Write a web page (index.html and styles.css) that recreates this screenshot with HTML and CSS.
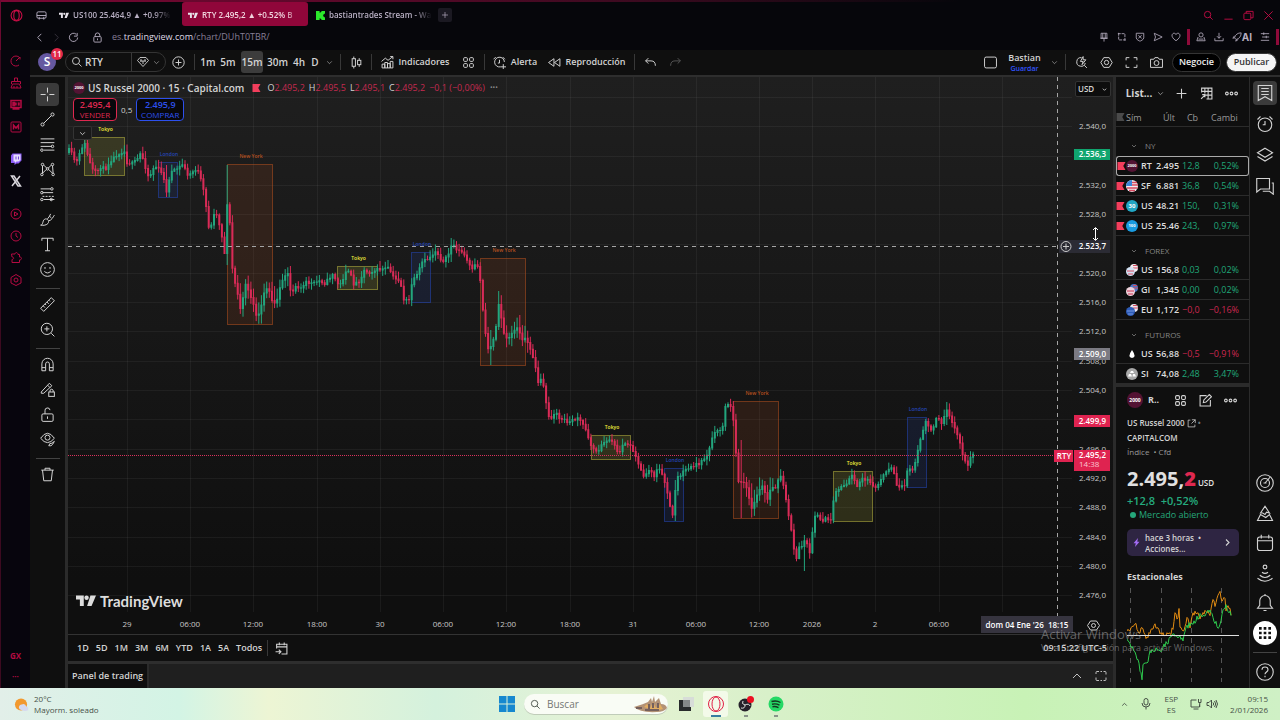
FILE: index.html
```html
<!DOCTYPE html>
<html lang="es">
<head>
<meta charset="utf-8">
<title>RTY 2.495,2 ▲ +0.52% Bastian</title>
<link rel="stylesheet" href="styles.css">
</head>
<body>
<svg class="defs" aria-hidden="true">
  <symbol id="search" viewBox="0 0 24 24"><circle cx="10" cy="10" r="7"/><path d="M15 15l6 6"/></symbol>
  <symbol id="chev" viewBox="0 0 24 24"><path d="M4 8l8 8 8-8"/></symbol>
  <symbol id="plus" viewBox="0 0 24 24"><path d="M12 3v18M3 12h18"/></symbol>
  <symbol id="pluscircle" viewBox="0 0 24 24"><circle cx="12" cy="12" r="10.5"/><path d="M12 6.500v11M6.500 12h11"/></symbol>
  <symbol id="tv" viewBox="0 0 36 20"><path class="solid" d="M0 0h14v19H7V7.500H0zM26 0h10l-8 19h-8z"/><circle class="solid" cx="19" cy="4" r="4"/></symbol>
  <symbol id="grid4" viewBox="0 0 24 24"><rect x="3" y="3" width="7" height="7" rx="2"/><rect x="14" y="3" width="7" height="7" rx="2"/><rect x="3" y="14" width="7" height="7" rx="2"/><rect x="14" y="14" width="7" height="7" rx="2"/></symbol>
  <symbol id="dots" viewBox="0 0 24 24"><circle cx="3.500" cy="12" r="2.500"/><circle cx="12" cy="12" r="2.500"/><circle cx="20.500" cy="12" r="2.500"/></symbol>
  <symbol id="gear" viewBox="0 0 24 24"><path d="M7 3h10l5.500 9-5.500 9H7l-5.500-9z"/><circle cx="12" cy="12" r="4"/></symbol>
  <symbol id="clock" viewBox="0 0 24 24"><circle cx="12" cy="12" r="10"/><path d="M12 6v6l4 3"/></symbol>
  <symbol id="alarm" viewBox="0 0 24 24"><circle cx="12" cy="13" r="9"/><path d="M12 8v5H9M2 6l4-4M22 6l-4-4"/></symbol>
  <symbol id="lock" viewBox="0 0 24 24"><rect x="4" y="10" width="16" height="12" rx="2"/><path d="M7 10V7a5 5 0 0 1 10 0v3M12 14v4"/></symbol>
  <symbol id="cal" viewBox="0 0 24 24"><rect x="2" y="4" width="20" height="18" rx="3"/><path d="M2 9h20M7 1v5M17 1v5"/></symbol>
  <symbol id="flag" viewBox="0 0 9 9"><path class="solid" d="M0 0h9L6.500 4.500 9 9H0z"/></symbol>
  <symbol id="us" viewBox="0 0 12 12"><circle cx="6" cy="6" r="6" fill="#f1eef2" stroke="none"/><path d="M6 2.500h5M6 5h6M1 8h10.500M3 10.500h6" stroke="#d84a5f" stroke-width="1.300"/><path d="M0 6A6 6 0 0 1 6 0v6z" fill="#3c86d8" stroke="none"/></symbol>
</svg>

<div class="window">
  <header class="browser">
    <div class="tabs">
      <button class="opera" aria-label="Opera GX"><svg viewBox="0 0 24 24"><circle cx="12" cy="12" r="10"/><ellipse cx="12" cy="12" rx="5" ry="9"/></svg></button>
      <button class="workspace" aria-label="Espacio"><svg viewBox="0 0 24 24"><rect x="2" y="4" width="20" height="14" rx="3"/><path d="M2 12h20M7 15v6M17 15v6"/></svg></button>
      <button class="tab"><svg class="wide"><use href="#tv"/></svg><span>US100 25.464,9 ▲ +0.97%</span></button>
      <button class="tab active"><svg class="wide"><use href="#tv"/></svg><span>RTY 2.495,2 ▲ +0.52% B</span></button>
      <button class="tab kick"><svg viewBox="0 0 10 10"><path class="solid" d="M0 0h4v2h1V1h1V0h4v3H9v1H8v2h1v1h1v3H6V9H5V8H4v2H0z"/></svg><span>bastiantrades Stream - Wa</span></button>
      <button class="newtab" aria-label="Nueva pestaña"><svg><use href="#plus"/></svg></button>
      <div class="winbtns">
        <button aria-label="Buscar"><svg><use href="#search"/></svg></button>
        <button aria-label="Minimizar"><svg viewBox="0 0 24 24"><path d="M3 20h18"/></svg></button>
        <button aria-label="Restaurar"><svg viewBox="0 0 24 24"><rect x="2" y="7" width="15" height="14" rx="2"/><path d="M7 7V3h15v14h-5"/></svg></button>
        <button aria-label="Cerrar"><svg viewBox="0 0 24 24"><path d="M3 3l18 18M21 3L3 21"/></svg></button>
      </div>
    </div>
    <div class="address">
      <button aria-label="Atrás"><svg class="rot90"><use href="#chev"/></svg></button>
      <button class="dim" aria-label="Adelante"><svg class="rot270"><use href="#chev"/></svg></button>
      <button aria-label="Recargar"><svg viewBox="0 0 24 24"><path d="M21 12a9 9 0 1 1-3-7M20 2v7h-7"/></svg></button>
      <button class="padlock" aria-label="Seguridad"><svg><use href="#lock"/></svg></button>
      <a class="url" href="#chart">es.<b>tradingview.com</b>/chart/DUhT0TBR/</a>
      <div class="extensions">
        <button aria-label="Fijar"><svg viewBox="0 0 24 24"><path d="M5 3h14v12H5zM9 3v12M15 3v12M12 15v8M3 15h18"/></svg></button>
        <button aria-label="Captura"><svg viewBox="0 0 24 24"><path d="M4 2v17h17M2 4h17v17" stroke-dasharray="7 2"/></svg></button>
        <button aria-label="Escudo"><svg viewBox="0 0 24 24"><path d="M3 3h18v11c0 5-9 8-9 8s-9-3-9-8zM8 8l8 7M16 8l-8 7"/></svg></button>
        <button aria-label="Enviar"><svg viewBox="0 0 24 24"><path d="M3 3l19 9-19 9 3-9z"/></svg></button>
        <button aria-label="Favorito"><svg viewBox="0 0 24 24"><path d="M12 21C-4 10 4 2 8 3c3 0 4 3 4 3s1-3 4-3c4-1 12 7-4 18z"/></svg></button>
        <i class="bar"></i>
        <button aria-label="Perfil"><svg viewBox="0 0 24 24"><circle cx="12" cy="7" r="5"/><path d="M5 12l-3 9h20l-3-9M6 17h12"/></svg></button>
        <button aria-label="Descargas"><svg viewBox="0 0 24 24"><path d="M12 2v13M7 10l5 5 5-5M2 15v6h20v-6"/></svg></button>
        <button class="ai"><svg viewBox="0 0 24 24"><path d="M6 14c2-8 8-12 16-12 0 8-4 14-12 16zM6 14l-4 1 4-6M10 18l-1 4 6-4"/></svg>AI</button>
        <button aria-label="Menú"><svg viewBox="0 0 24 24"><path d="M2 4h20M5 12h17M2 20h20M9 1v6M15 9v6"/></svg></button>
        <i class="bar"></i>
      </div>
    </div>
  </header>

  <div class="middle">
    <nav class="gx">
      <button aria-label="GX Control"><svg viewBox="0 0 24 24"><path d="M18 20A10 10 0 1 1 19 5M12 12l8-8v5"/></svg></button>
      <button aria-label="GX Cleaner"><svg viewBox="0 0 24 24"><path d="M9 9V2h6v7M3 14V9h18v5M5 14l-3 8h20l-3-8zM8 18v4M14 18v4"/></svg></button>
      <button aria-label="Mods"><svg viewBox="0 0 24 24"><path d="M2 3h20v14H2zM5 20h14M6 7h3v6H6zM12 7v6M16 7l3 6M19 7l-3 6" stroke-width="3"/></svg></button>
      <button aria-label="Mercado"><svg viewBox="0 0 24 24"><rect x="2" y="2" width="20" height="20" rx="2"/><path d="M7 17V8l5 6 5-6v9" stroke-width="3"/></svg></button>
      <button class="twitch" aria-label="Twitch"><svg viewBox="0 0 24 24"><path fill="#8b5cf6" stroke="none" d="M5 1h18v14l-6 6h-4l-4 3v-4H2V5z"/><path fill="#e6dcff" stroke="none" d="M7 3h14v11l-4 3h-4l-3 3v-3H7z"/><path stroke="#7348d8" d="M12 7v6M17 7v6"/></svg></button>
      <button class="x" aria-label="X"><svg viewBox="0 0 24 24"><path d="M3 2h5l13 20h-5zM20 2L4 22" stroke-width="3"/></svg></button>
      <button class="gap" aria-label="Reproductor"><svg viewBox="0 0 24 24"><circle cx="12" cy="12" r="10"/><path d="M9 8l7 4-7 4z"/></svg></button>
      <button aria-label="Historial"><svg><use href="#clock"/></svg></button>
      <button aria-label="Extensiones"><svg viewBox="0 0 24 24"><path d="M3 4h7c1-5 6-3 6 1h3v5c6 0 5 6 0 6v5H4v-6c5-1 4-5 0-5z"/></svg></button>
      <button aria-label="Ajustes"><svg viewBox="0 0 24 24"><path d="M12 1l10 6v11l-10 5-10-5V7z"/><circle cx="12" cy="12" r="4"/></svg></button>
      <span class="gxtext">GX</span>
      <span class="gxdots">•••</span>
    </nav>

    <div class="app">
      <div class="toolbar">
        <button class="avatar">S<span>11</span></button>
        <div class="searchbox">
          <label for="sym" aria-label="Símbolo"><svg><use href="#search"/></svg></label>
          <input id="sym" value="RTY">
          <button aria-label="Premium"><svg viewBox="0 0 24 24"><path d="M6 3h12l5 6-11 12L1 9zM6 10h12M8 6v5M16 6v5M12 10v6" /></svg><svg class="tiny"><use href="#chev"/></svg></button>
        </div>
        <button class="ib" aria-label="Comparar"><svg><use href="#pluscircle"/></svg></button>
        <i class="sep"></i>
        <button class="tf">1m</button><button class="tf">5m</button><button class="tf on">15m</button><button class="tf w">30m</button><button class="tf">4h</button><button class="tf d">D</button>
        <button class="chevb" aria-label="Más intervalos"><svg class="tiny"><use href="#chev"/></svg></button>
        <i class="sep"></i>
        <button class="cb" aria-label="Velas"><svg viewBox="0 0 24 24"><path d="M7 1v4M7 19v4M17 4v4M17 16v4"/><rect x="4" y="5" width="6" height="14"/><rect x="14" y="8" width="6" height="8"/></svg></button>
        <i class="sep"></i>
        <button class="lb ind"><svg viewBox="0 0 24 24"><path d="M1 10l7-6 5 4 9-7M17 1h5v5M2 22v-7h5v7M7 22V12h5v10M12 22v-8h5v8M17 22V10h5v12zH2"/></svg>Indicadores</button>
        <button class="gb" aria-label="Plantillas"><svg><use href="#grid4"/></svg></button>
        <i class="sep"></i>
        <button class="lb al"><svg viewBox="0 0 24 24"><path d="M14 20a9 9 0 1 1 7-9M12 7v6H9M1 6l4-4M22 6l-4-4M19 15v9M14 20h10"/></svg>Alerta</button>
        <button class="lb rp"><svg viewBox="0 0 24 24"><path d="M11 5v14L1 12zM22 5v14l-10-7z"/></svg>Reproducción</button>
        <i class="sep"></i>
        <button class="ib" aria-label="Deshacer"><svg viewBox="0 0 24 24"><path d="M8 4L3 9l5 5M3 9h10q8 0 8 9"/></svg></button>
        <button class="ib faint" aria-label="Rehacer"><svg viewBox="0 0 24 24"><path d="M16 4l5 5-5 5M21 9H11q-8 0-8 9"/></svg></button>
        <div class="tools-right">
          <button class="ib" aria-label="Diseño"><svg viewBox="0 0 24 24"><rect x="1" y="2" width="22" height="20" rx="3"/></svg></button>
          <button class="layoutname">Bastian<small>Guardar</small></button>
          <button class="chevb" aria-label="Diseños"><svg class="tiny"><use href="#chev"/></svg></button>
          <i class="sep"></i>
          <button class="ib" aria-label="Búsqueda rápida"><svg viewBox="0 0 24 24"><path d="M12 3a8 8 0 1 0 7 10M17 17l5 5M15 1l-5 9h5l-2 6 7-9h-5z"/></svg></button>
          <button class="ib" aria-label="Configuración"><svg><use href="#gear"/></svg></button>
          <button class="ib" aria-label="Pantalla completa"><svg viewBox="0 0 24 24"><path d="M2 8V3h6M16 3h6v5M22 16v5h-6M8 21H2v-5"/></svg></button>
          <button class="ib" aria-label="Instantánea"><svg viewBox="0 0 24 24"><path d="M1 6h6l2-3h6l2 3h6v15H1z"/><circle cx="12" cy="13" r="4.500"/></svg></button>
          <button class="pill">Negocie</button>
          <button class="pill white">Publicar</button>
        </div>
      </div>

      <div class="workspace-row">
        <div class="draw">
          <button class="sel" aria-label="Cruz"><svg viewBox="0 0 24 24"><path d="M12 1v8M12 15v8M1 12h8M15 12h8"/></svg></button>
          <button aria-label="Línea"><svg viewBox="0 0 24 24"><circle cx="4" cy="20" r="2.500"/><circle cx="20" cy="4" r="2.500"/><path d="M6 18L18 6"/></svg></button>
          <button aria-label="Fibonacci"><svg viewBox="0 0 24 24"><path d="M1 3h22M1 9h22M1 15h18M6 21h17"/><circle cx="20" cy="15" r="2"/><circle cx="3" cy="21" r="2"/></svg></button>
          <button aria-label="Patrones"><svg viewBox="0 0 24 24"><circle cx="4" cy="4" r="2"/><circle cx="20" cy="4" r="2"/><circle cx="12" cy="11" r="2"/><circle cx="3" cy="20" r="2"/><circle cx="21" cy="20" r="2"/><path d="M4 6v12M20 6l1 12M6 5l5 5M18 5l-5 5M10 12l-6 6M14 12l6 6"/></svg></button>
          <button aria-label="Predicción"><svg viewBox="0 0 24 24"><path d="M1 3h16M4 9h17M6 20h17" /><path d="M4 15h18" stroke-dasharray="3 2"/><circle cx="19" cy="3" r="2"/><circle cx="3" cy="9" r="2"/><circle cx="3" cy="20" r="2"/><circle cx="18" cy="20" r="2"/></svg></button>
          <button aria-label="Pincel"><svg viewBox="0 0 24 24"><path d="M1 21c5 0 2-9 8-10 4 0 6 4 4 7s-8 4-12 3zM12 11l3-4 3 2M15 7l2-4M14 14c4 0 7-6 9-9"/></svg></button>
          <button aria-label="Texto"><svg viewBox="0 0 24 24"><path d="M3 6V2h18v4M12 2v20M8 22h8"/></svg></button>
          <button aria-label="Iconos"><svg viewBox="0 0 24 24"><circle cx="12" cy="12" r="11"/><path d="M8 8v3M16 8v3M7 15q5 5 10 0"/></svg></button>
          <hr>
          <button aria-label="Medir"><svg viewBox="0 0 24 24"><path d="M1 18L18 1l5 5L6 23zM5 14l3 3M8 11l2 2M11 8l3 3M14 5l2 2"/></svg></button>
          <button aria-label="Ampliar"><svg viewBox="0 0 24 24"><circle cx="11" cy="11" r="9"/><path d="M18 18l5 5M11 7v8M7 11h8"/></svg></button>
          <hr>
          <button aria-label="Imán"><svg viewBox="0 0 24 24"><path d="M3 22V11a9 9 0 0 1 18 0v11h-6V11a3 3 0 0 0-6 0v11zM3 17h6M15 17h6"/></svg></button>
          <button aria-label="Seguir dibujando"><svg viewBox="0 0 24 24"><path d="M2 16L15 2l4 4L6 18H2zM12 5l4 4"/><rect x="14" y="16" width="9" height="7"/><path d="M16 16v-3q3-3 5 0v3"/></svg></button>
          <button aria-label="Bloquear"><svg viewBox="0 0 24 24"><rect x="3" y="11" width="18" height="12" rx="2"/><path d="M8 11V6a4 4 0 0 1 8-1M12 15v4"/></svg></button>
          <button aria-label="Ocultar"><svg viewBox="0 0 24 24"><path d="M1 10q11-16 22 0Q12 24 1 10z"/><circle cx="12" cy="9" r="4"/><path d="M14 22q1-5 5-4l4-3-3 5q-2 3-6 2z"/></svg></button>
          <hr>
          <button aria-label="Eliminar"><svg viewBox="0 0 24 24"><path d="M2 5h20M8 5V2h8v3M4 5l2 17h12l2-17"/></svg></button>
        </div>

        <main class="center" id="chart">
          <div class="chartwrap">
            <svg id="plot" class="plot" viewBox="68 77 1045 557">
              <g id="gridlines"></g>
              <g id="sessions"></g>
              <g id="candles"></g>
              <path class="priceline" d="M68 455.500H1054"/>
              <path class="cross" d="M68 246.500H1060M1057.500 77V616"/>
              <g id="axes"></g>
              <rect x="1074" y="149" width="36" height="11" fill="#10a56f"/><text class="tag" x="1106" y="157">2.536,3</text>
              <rect x="1059" y="240" width="51" height="13" fill="#2b2b34"/><text class="tag" x="1106" y="249">2.523,7</text>
              <g class="line"><circle cx="1066" cy="246.500" r="5"/><path d="M1063 246.500h6M1066 243.500v6"/></g>
              <rect x="1074" y="348" width="36" height="12" fill="#7b7a83"/><text class="tag" x="1106" y="357">2.509,0</text>
              <rect x="1074" y="415" width="36" height="12" fill="#df2350"/><text class="tag" x="1106" y="424">2.499,9</text>
              <rect x="1074" y="450" width="36" height="21" fill="#df2350"/><text class="tag" x="1106" y="458">2.495,2</text><text class="axis pale" x="1079" y="467">14:38</text>
              <rect x="1054" y="450" width="19" height="12" fill="#df2350"/><text class="tag mid" x="1064" y="459">RTY</text>
              <path class="cursor" d="M1095.500 228v12M1093 230l2.500-2.500 2.500 2.500M1093 238l2.500 2.500 2.500-2.500"/>
              <rect x="981" y="616" width="92" height="17" fill="#36343f"/><text class="tag mid" x="1027" y="628" xml:space="preserve">dom 04 Ene '26  18:15</text>
              <g class="line"><path d="M1090.500 621h6l3 4.500-3 4.500h-6l-3-4.500z"/><circle cx="1093.500" cy="625.500" r="2"/></g>
            </svg>
            <div class="legend">
              <div class="title"><span class="rlogo">2000</span><h1>US Russel 2000 · 15 · Capital.com</h1><svg class="flag"><use href="#flag"/></svg>
                <span class="ohlc">O<b>2.495,2</b></span><span class="ohlc">H<b>2.495,5</b></span><span class="ohlc">L<b>2.495,1</b></span><span class="ohlc">C<b>2.495,2</b></span><span class="ohlc"><b>−0,1 (−0,00%)</b></span><span class="more">•••</span></div>
              <div class="trade"><button class="sell"><b>2.495,4</b>VENDER</button><span>0,5</span><button class="buy"><b>2.495,9</b>COMPRAR</button></div>
              <button class="fold" aria-label="Contraer"><svg><use href="#chev"/></svg></button>
            </div>
            <div class="currency"><select aria-label="Moneda"><option>USD</option></select><svg><use href="#chev"/></svg></div>
            <div class="brand"><svg><use href="#tv"/></svg>TradingView</div>
          </div>
          <div class="ranges">
            <button>1D</button><button>5D</button><button>1M</button><button>3M</button><button>6M</button><button>YTD</button><button>1A</button><button>5A</button><button>Todos</button>
            <i class="sep"></i>
            <button aria-label="Ir a la fecha"><svg viewBox="0 0 24 24"><path d="M3 12V4h19v18H12M3 9h19M8 1v5M17 1v5M1 18h9M7 14l4 4-4 4"/></svg></button>
            <button class="utc">09:15:22 UTC-5</button>
          </div>
          <div class="panel">
            <button class="paneltab">Panel de trading</button>
            <button class="pi" aria-label="Abrir"><svg class="rot180"><use href="#chev"/></svg></button>
            <button class="pi" aria-label="Maximizar"><svg viewBox="0 0 24 24"><path d="M2 8V5q0-2 2-2h4M11 3h3M17 3h3q2 0 2 2v4M22 15v4q0 2-2 2h-3M14 21h-3M8 21H4q-2 0-2-2v-4"/></svg></button>
          </div>
        </main>

        <aside class="side">
          <section class="watch">
            <div class="wh"><button class="ttl">List...</button><button class="tinyb" aria-label="Listas"><svg class="tiny"><use href="#chev"/></svg></button><button aria-label="Añadir"><svg><use href="#plus"/></svg></button><button aria-label="Tabla"><svg viewBox="0 0 24 24"><path d="M3 10V2h19v20H12M3 8h19M9 2v10M15 2v20M9 15h13M2 22l7-7M4 14h5v5"/></svg></button><button aria-label="Más"><svg><use href="#dots"/></svg></button></div>
            <table>
              <thead><tr><th class="cf"><svg class="flag grey"><use href="#flag"/></svg></th><th class="cl" colspan="2">Sím</th><th class="cp">Últ</th><th class="cc">Cb</th><th class="cx">Cambi</th></tr></thead>
              <tbody id="quotes"></tbody>
            </table>
          </section>
          <section class="detail">
            <div class="dh"><span class="rlogo big">2000</span><b>R..</b><button aria-label="Cuadrícula"><svg><use href="#grid4"/></svg></button><button aria-label="Nota"><svg viewBox="0 0 24 24"><path d="M14 3H2v19h19V11M8 16l1-5L19 1l4 4-10 10z"/></svg></button><button aria-label="Más"><svg><use href="#dots"/></svg></button></div>
            <p class="nm">US Russel 2000 <svg viewBox="0 0 24 24"><path d="M9 3H3v18h18v-6M13 2h9v9M22 2L12 12"/></svg> <i>•</i><br>CAPITALCOM</p>
            <p class="kind">Índice &nbsp;• Cfd</p>
            <p class="big-price">2.495,<b>2</b><small>USD</small></p>
            <p class="chg">+12,8&ensp;+0,52%</p>
            <p class="open"><i></i>Mercado abierto</p>
            <button class="news"><svg viewBox="0 0 12 12"><path fill="#a26bf2" stroke="none" d="M8 0L2 7h3l-1 5 6-7H7z"/></svg><span>hace 3 horas&ensp;•<br>Acciones...</span><svg class="tiny rot270"><use href="#chev"/></svg></button>
            <h2>Estacionales</h2>
            <svg id="seasonal" class="seasonal" viewBox="1127 586 112 96"></svg>
          </section>
        </aside>

        <nav class="rail">
          <button class="sel" aria-label="Lista de seguimiento"><svg viewBox="0 0 24 24"><path d="M3 2h18v20l-9-5-9 5zM7 6h10M7 10h10M7 14h10"/></svg></button>
          <button aria-label="Alertas"><svg><use href="#alarm"/></svg></button>
          <button aria-label="Capas"><svg viewBox="0 0 24 24"><path d="M12 3l10 6-10 6L2 9zM2 14l10 6 10-6"/></svg></button>
          <button aria-label="Chats"><svg viewBox="0 0 24 24"><path d="M1 2h17v14H6l-5 4zM21 8h2v15l-5-4H9"/></svg></button>
          <div class="lower">
            <button aria-label="Ideas"><svg viewBox="0 0 24 24"><circle cx="12" cy="12" r="11"/><circle cx="12" cy="12" r="6"/><path d="M12 12l7-8M10 12h4"/></svg></button>
            <button aria-label="Comunidad"><svg viewBox="0 0 24 24"><path d="M6 12l6-9 6 9-4-1-2 3-3-2zM6 14l-4 8h20l-4-8-5 4z"/></svg></button>
            <button aria-label="Calendario"><svg><use href="#cal"/></svg></button>
            <button aria-label="Streams"><svg viewBox="0 0 24 24"><circle cx="12" cy="4" r="2.500"/><path d="M8 11q4 3 8 0M5 15q7 6 14 0M2 19q10 8 20 0"/></svg></button>
            <button aria-label="Notificaciones"><svg viewBox="0 0 24 24"><path d="M2 19l3-4V9a7 7 0 0 1 14 0v6l3 4zM10 22h4M12 0v2"/></svg></button>
            <button class="apps" aria-label="Productos"><svg viewBox="0 0 24 24"><path class="solid" d="M3 3h4v4H3zM10 3h4v4h-4zM17 3h4v4h-4zM3 10h4v4H3zM10 10h4v4h-4zM17 10h4v4h-4zM3 17h4v4H3zM10 17h4v4h-4zM17 17h4v4h-4z"/></svg></button>
            <hr>
            <button aria-label="Ayuda"><svg viewBox="0 0 24 24"><circle cx="12" cy="12" r="11"/><path d="M8 9c0-5 8-5 8 0 0 3-4 3-4 6M12 17v2"/></svg></button>
          </div>
        </nav>
      </div>
    </div>
  </div>

  <footer class="taskbar">
    <button class="weather"><svg viewBox="0 0 16 16"><circle cx="7.500" cy="8" r="6.500" fill="#f2992e"/><path d="M6 13a3 3 0 0 1 2-5q4-2 5 2 3 0 2 4-4 2-9-1z" fill="#d5d9ef"/></svg><span>20°C<br>Mayorm. soleado</span></button>
    <div class="apps-row">
      <button aria-label="Inicio"><svg viewBox="0 0 16 16"><path fill="#1688cf" d="M0 0h7.500v7.500H0zM8.500 0H16v7.500H8.500zM0 8.500h7.500V16H0zM8.500 8.500H16V16H8.500z"/></svg></button>
      <label class="find"><svg class="mag"><use href="#search"/></svg><input placeholder="Buscar" aria-label="Buscar"><svg class="city" viewBox="0 0 34 18"><path d="M1 12q10-3 14-5l3-4 1 4 2-6 1 6 4-4 2 6q5 0 6 4-3 4-10 4Q7 18 1 12z" fill="#b39275"/><path d="M11 12l3-3 3 4 3-6 3 6 4-4 3 5-7 2zM4 12l4 3" fill="#e2ad61"/><path d="M16 9v5M20 8v5M25 8v5M3 13h6M12 15h14" stroke="#75605c"/></svg></label>
      <button aria-label="Vista de tareas"><svg viewBox="0 0 16 16"><path d="M5 1h11v10H5z" fill="#d7dcd8"/><path d="M1 4h4v7h8v4H1z" fill="#282b2c"/><path d="M5 4h7v7H5z" fill="#858989"/></svg></button>
      <button class="run" aria-label="Opera GX"><svg viewBox="0 0 16 16"><circle cx="8" cy="8" r="7.500"/><ellipse cx="8" cy="8" rx="4" ry="7"/></svg></button>
      <button class="on" aria-label="OBS"><svg viewBox="0 0 16 16"><circle cx="7" cy="9" r="6.500" fill="#25212a"/><path d="M7 9q-4-1-2-4M7 9q4-2 5 1M7 9q0 4-4 3" fill="none" stroke="#ddd"/><circle cx="12.500" cy="3.500" r="3.500" fill="#ec1022"/></svg></button>
      <button class="on" aria-label="Spotify"><svg viewBox="0 0 16 16"><circle cx="8" cy="8" r="7.500" fill="#25d865"/><path d="M3.500 5.500q5-1.500 9 1M4 8.200q4-1 7.500 1M4.500 10.700q3-.7 6 1" fill="none" stroke="#15351f" stroke-width="1.400"/></svg></button>
    </div>
    <div class="tray">
      <button aria-label="Iconos ocultos"><svg class="rot180 tiny"><use href="#chev"/></svg></button>
      <button class="mic" aria-label="Micrófono"><svg viewBox="0 0 24 24"><rect x="8" y="1" width="8" height="13" rx="4"/><path d="M4 10q0 8 8 8t8-8M12 18v5"/></svg></button>
      <button class="lang">ESP<br>ES</button>
      <button class="net" aria-label="Red y sonido"><svg viewBox="0 0 24 24"><path d="M13 4H2v14h17v-5M7 22h10M17 2v7h5V2M19.500 9v9"/></svg><svg viewBox="0 0 24 24"><path d="M2 9h4l5-5v16l-5-5H2zM14 9q3 3 0 6M17 6q5 6 0 12M20 4q6 8 0 16"/></svg></button>
      <button class="time">09:15<br>2/01/2026</button>
    </div>
  </footer>
  <div class="watermark"><strong>Activar Windows</strong>Ve a Configuración para activar Windows.</div>
</div>
<script src="chart.js"></script>
</body>
</html>
```

FILE: styles.css
```css
* { box-sizing: border-box; }
body { margin: 0; background: #08070d; color: #d3d3d3; font: 10px/12px "Open Sans", "Noto Sans", sans-serif; }
button, input, select { font: inherit; color: inherit; background: none; border: 0; padding: 0; margin: 0; }
button { display: inline-flex; align-items: center; justify-content: center; flex: none; white-space: nowrap; }
p, h1, h2 { margin: 0; }
hr { width: 24px; height: 1px; border: 0; margin: 5px 0 2px; background: #434343; }
svg { width: 13px; height: 13px; flex: none; fill: none; stroke: currentColor; stroke-width: 2; }
.defs { position: absolute; width: 0; height: 0; }
.solid { fill: currentColor; stroke: none; }
svg.tiny { width: 7px; height: 7px; stroke-width: 3; }
.rot90 { transform: rotate(90deg); }
.rot180 { transform: rotate(180deg); }
.rot270 { transform: rotate(270deg); }

.window { position: relative; display: flex; flex-direction: column; height: 100vh; overflow: hidden; }

/* browser chrome */
.browser { height: 50px; flex: none; background: #06060b; background-image: linear-gradient(90deg, #7c0734, #3c0a20 50%, #06060b 75%); background-size: 100% 2px; background-repeat: no-repeat; border-left: 1px solid #6a0a30; }
.tabs { display: flex; align-items: center; height: 27px; padding: 3px 5px 0 0; color: #b9b0c4; }
.opera { width: 30px; color: #c90e46; }
.workspace { width: 20px; }
.workspace svg { width: 11px; height: 11px; }
.tab { width: 118px; height: 21px; margin-left: 5px; margin-right: 8px; justify-content: flex-start; gap: 4px; padding: 0 3px; font-size: 8px; font-weight: 600; }
.tab span { flex: 1; text-align: left; mask-image: linear-gradient(90deg, #000 82%, transparent); }
.tab svg { width: 9px; height: 9px; }
.tab svg.wide { width: 10px; color: #e7e2ea; height: 7px; }
.tab.active { width: 126px; margin: 0 8px 0 0; padding: 0 6px; background: #90063a; color: #f1d5de; border-radius: 3px; box-shadow: 0 -3px #90063a; }
.tab.kick { margin: 0; width: 116px; padding: 0; }
.tab.kick svg { color: #2be82b; }
.newtab { width: 14px; height: 14px; margin-left: 6px; background: #1b1922; border-radius: 2px; }
.newtab svg { width: 8px; height: 8px; }
.winbtns { display: flex; gap: 7px; margin-left: auto; color: #c20c45; }
.winbtns svg { width: 11px; height: 11px; margin: 0 1px; }
.address { display: flex; align-items: center; height: 20px; padding-left: 30px; color: #b6adbf; }
.address > button { width: 17px; }
.address svg { width: 11px; height: 11px; }
.address .dim { color: #393540; }
.address .padlock { width: 24px; margin-left: 3px; }
.url { margin-left: 3px; font-size: 9px; color: #877e96; text-decoration: none; }
.url b { font-weight: 400; color: #ded8e4; }
.extensions { display: flex; align-items: center; gap: 8px; margin-left: auto; padding-right: 3px; }
.extensions svg { width: 10px; height: 10px; }
.extensions .ai { font: 700 10px/12px Inter, sans-serif; }
.bar { width: 3px; height: 16px; margin: 0 -2px; background: #8e0a3a; }
.middle { display: flex; flex: 1; min-height: 0; }
.gx { width: 30px; flex: none; display: flex; flex-direction: column; align-items: center; background: #07050d; border-left: 1px solid #3c0a20; color: #b40b42; }
.gx button { height: 22px; }
.gx svg { width: 12px; height: 12px; }
.gx .twitch { margin-top: 10px; }
.gx .x { color: #d8d5dc; }
.gx .gap { margin-top: 11px; }
.gxtext { margin-top: auto; font-size: 8px; font-weight: 700; }
.gxdots { font-size: 6px; margin: 9px 0 5px; }

/* top toolbar */
.app { flex: 1; min-width: 0; display: flex; flex-direction: column; background: #0f0f0f; }
.toolbar { height: 27px; flex: none; display: flex; align-items: center; padding-bottom: 1px; border-bottom: 2px solid #2e2e2e; font-weight: 600; }
.toolbar svg { stroke-width: 1.8; }
.avatar { position: relative; width: 18px; height: 18px; margin: 0 9px 0 8px; border-radius: 50%; background: #6558a0; color: #fff; font-size: 12px; }
.avatar span { position: absolute; left: 13px; top: -5px; width: 12px; height: 12px; border-radius: 50%; background: #e22849; font-size: 8px; line-height: 12px; }
.searchbox { display: flex; align-items: center; width: 101px; height: 20px; border: 1px solid #343434; border-radius: 10px; padding-left: 5px; }
.searchbox label { display: flex; }
.searchbox svg { width: 12px; height: 12px; }
.searchbox input { flex: 1; min-width: 0; padding-left: 2px; outline: 0; }
.searchbox button { width: 34px; height: 18px; gap: 4px; border-left: 1px solid #3a3a3a; }
.searchbox svg.tiny { width: 7px; height: 7px; }
.ib { width: 25px; height: 22px; }
.faint { color: #555; }
.sep { width: 1px; height: 16px; margin: 0 3px; background: #383838; flex: none; }
.tf { min-width: 20px; height: 22px; }
.tf.on { width: 22px; margin: 0 3px; background: #3c3c3c; border-radius: 3px; }
.tf.w { width: 23px; }
.tf.d { min-width: 12px; }
.chevb { width: 16px; }
.cb { width: 24px; }
.lb { gap: 5px; font-size: 9px; }
.ind { width: 80px; }
.gb { width: 26px; }
.al { width: 54px; }
.rp { width: 89px; }
.tools-right { display: flex; align-items: center; margin-left: auto; padding-right: 3px; }
.layoutname { flex-direction: column; width: 43px; font-size: 9px; line-height: 12px; }
.layoutname small { font-size: 7px; line-height: 9px; color: #3154ff; }
.pill { height: 19px; width: 49px; margin-left: 3px; border: 1px solid #343434; border-radius: 10px; background: #000; color: #eee; font-size: 9px; }
.pill.white { width: 51px; margin-left: 5px; background: #f5f5f5; color: #333; }

/* drawing tools */
.workspace-row { flex: 1; min-height: 0; display: flex; }
.draw { width: 38px; flex: none; display: flex; flex-direction: column; align-items: center; gap: 2px; padding: 6px 0 0; border-right: 3px solid #2b2b2b; }
.draw button { width: 23px; height: 23px; border-radius: 4px; }
.draw svg { width: 15px; height: 15px; stroke-width: 1.6; }
.draw .sel, .rail .sel { background: #3b3b3b; }

/* chart */
.center { flex: 1; min-width: 0; display: flex; flex-direction: column; border-right: 3px solid #2b2b2b; }
.chartwrap { position: relative; flex: 1; min-height: 0; background: linear-gradient(#1f1f1f, #181818 40%, #0f0f0f 90%); }
.plot { display: block; width: 100%; height: 100%; stroke: none; }
.gridline { stroke: #fff; stroke-opacity: .05; stroke-width: 1; }
.up { stroke: #23a67e; }
.down { stroke: #d92b57; }
.wick { stroke-width: 1; }
.body { stroke-width: 2; }
.cross { stroke: #a5a5a5; stroke-width: 1; stroke-dasharray: 4 4; }
.priceline { stroke: #d8325c; stroke-width: 1; stroke-dasharray: 1 1; }
.cursor { stroke: #fff; stroke-width: 1; }
.line { stroke: #ccc; stroke-width: 1; }
.axis, .tag { font-size: 8px; font-weight: 500; fill: #c8c8c8; }
.axis.pale { fill: #fbc4d0; }
.axis.right, .tag { text-anchor: end; }
.axis.mid, .tag.mid { text-anchor: middle; }
.tag { fill: #fff; font-weight: 600; }
.slabel { font-size: 5px; text-anchor: middle; font-weight: 600; }
.legend { position: absolute; left: 5px; top: 4px; }
.title { display: flex; align-items: center; height: 13px; }
.title h1 { margin: 0 8px 0 3px; font-size: 10px; font-weight: 600; }
.rlogo { width: 12px; height: 12px; border-radius: 50%; background: #531333; color: #fff; font-size: 4px; font-weight: 700; text-align: center; line-height: 12px; flex: none; }
.rlogo.big { width: 16px; height: 16px; font-size: 5px; line-height: 16px; }
.flag { width: 9px; height: 8px; color: #f23e5c; }
.flag.grey { color: #4a4a4a; }
.ohlc { margin-left: 4px; font-size: 9px; }
.flag + .ohlc { margin-left: 6px; }
.ohlc b { font-weight: 400; color: #c42a50; }
.more { margin-left: 5px; font-size: 7px; color: #888; }
.trade { display: flex; align-items: center; gap: 4px; margin-top: 4px; font-size: 8px; }
.trade button { flex-direction: column; height: 23px; border: 1px solid; border-radius: 4px; background: #08080c; font-size: 8px; line-height: 9px; }
.trade b { font-size: 9px; font-weight: 600; line-height: 10px; }
.sell { width: 44px; color: #df2850; }
.buy { width: 48px; color: #2d50ed; }
.fold { width: 19px; height: 14px; margin-top: 5px; border: 1px solid #343434; border-radius: 2px; background: #191919; }
.fold svg { width: 7px; height: 7px; stroke-width: 3; }
.currency { position: absolute; right: 2px; top: 4px; display: flex; align-items: center; padding: 0 3px 0 2px; height: 16px; background: #0d0d0d; border: 1px solid #333; border-radius: 2px; }
.currency select { appearance: none; width: 24px; font-size: 8px; font-weight: 600; outline: 0; }
.currency svg { width: 5px; height: 5px; stroke-width: 4; }
.brand { position: absolute; left: 8px; bottom: 24px; display: flex; align-items: center; gap: 4px; font: 700 15px/18px Lato, sans-serif; color: #ddd; }
.brand svg { width: 20px; height: 12px; }
.ranges { height: 27px; flex: none; display: flex; align-items: center; gap: 7px; padding: 0 6px 0 9px; border-top: 1px solid #333; font-size: 9px; font-weight: 600; }
.ranges .sep { margin: 0 0 0 -2px; }
.utc { margin-left: auto; }
.panel { height: 27px; flex: none; display: flex; border-top: 3px solid #2e2e2e; background: #1f1f1f; }
.paneltab { padding: 0 4px; margin-right: auto; background: #0f0f0f; font-weight: 600; font-size: 9px; border-right: 2px solid #2a2a2a; }
.pi { width: 24px; }
.pi svg { width: 12px; height: 12px; stroke-width: 1.8; }

/* watchlist */
.side { width: 133px; flex: none; display: flex; flex-direction: column; }
.watch { border-bottom: 3px solid #2b2b2b; }
.wh { display: flex; align-items: center; height: 32px; padding-left: 11px; }
.wh button { width: 25px; }
.wh .ttl { width: 24px; font-weight: 700; }
.wh .tinyb { width: 18px; color: #999; }
table { width: 100%; table-layout: fixed; border-collapse: separate; border-spacing: 0; }
th, td { padding: 0; text-align: left; white-space: nowrap; border-bottom: 1px solid #2b2b2b; height: 20px; }
th { height: 18px; font-weight: 400; font-size: 9px; color: #999; }
.cf { width: 10px; } .cl { width: 30px; } .cp { width: 26px; } .cc { width: 21px; } .cx { width: 46px; }
th.cp, th.cc { text-align: center; }
th.cx { padding-left: 8px; }
.lg { width: 17px; } .lg svg, .coin { display: block; width: 12px; height: 12px; }
.coin { border-radius: 50%; color: #fff; font: 700 6px/12px "Open Sans", sans-serif; text-align: center; }
.coin.small { font-size: 4px; }
.sy, .la, .ch, .pc { font-size: 9px; }
.sy, .la { font-weight: 600; color: #ddd; }
.pc { text-align: right; padding-right: 10px; }
.pos { color: #20a779; } .neg { color: #cc2750; }
.group td { height: 24px; padding: 6px 0 0 15px; border: 0; font-size: 8px; color: #858585; }
.group.first td { height: 29px; padding-top: 9px; }
.group svg { width: 6px; height: 6px; margin-right: 8px; stroke-width: 3; }
.picked td { border-top: 1px solid #aaa; border-bottom-color: #aaa; }
.picked td:first-child { border-left: 1px solid #aaa; border-radius: 3px 0 0 3px; }
.picked td:last-child { border-right: 1px solid #aaa; border-radius: 0 3px 3px 0; }
.picked td.pc { padding-right: 9px; }

/* symbol details */
.detail { padding: 3px 0 0 11px; }
.dh { display: flex; align-items: center; height: 20px; }
.dh b { width: 20px; margin-left: 5px; font-size: 9px; }
.dh button { width: 25px; }
.nm { margin-top: 5px; font-size: 8px; font-weight: 600; line-height: 15px; }
.nm svg { width: 9px; height: 9px; vertical-align: -2px; }
.nm i { color: #777; font-style: normal; }
.kind { font-size: 8px; line-height: 13px; color: #999; }
.big-price { margin-top: 9px; font: 700 20px/23px "Open Sans", sans-serif; color: #e0e0e0; }
.big-price b { color: #df2850; }
.big-price small { margin-left: 2px; font-size: 8px; font-weight: 600; }
.chg { font-size: 11px; line-height: 13px; font-weight: 600; color: #25ab7e; }
.open { display: flex; align-items: center; gap: 3px; padding-left: 3px; font-size: 9px; line-height: 15px; color: #25a77b; }
.open i { width: 6px; height: 6px; border-radius: 50%; background: #25a77b; }
.news { width: calc(100% - 10px); height: 27px; margin-top: 7px; padding: 0 7px 0 5px; border-radius: 5px; background: #2e2542; font-size: 8px; line-height: 11px; font-weight: 600; }
.news span { flex: 1; padding-left: 4px; text-align: left; }
.news svg { width: 9px; height: 9px; }
.detail h2 { margin: 14px 0 4px; font-size: 9px; line-height: 13px; font-weight: 700; }
.seasonal { display: block; width: calc(100% - 10px); height: auto; stroke-width: 1; }

.rail { width: 31px; flex: none; display: flex; flex-direction: column; align-items: center; gap: 7px; padding-top: 4px; border-left: 1px solid #2b2b2b; }
.rail button { width: 24px; height: 24px; border-radius: 4px; }
.rail svg { width: 18px; height: 18px; stroke-width: 1.5; }
.lower { display: flex; flex-direction: column; align-items: center; gap: 6px; margin-top: auto; padding-bottom: 4px; }
.lower hr { margin: 1px 0; }
.rail .apps { border-radius: 50%; background: #fff; color: #111; }
.apps svg { width: 16px; height: 16px; }

/* windows taskbar */
.taskbar { height: 32px; flex: none; display: grid; grid-template-columns: 1fr auto 1fr; align-items: center; padding: 0 12px 0 14px; background: linear-gradient(90deg, #e2efe9, #d3f4e5 14%, #edf5d4 21%, #d4f1dd 34%, #e6f2d4 48%, #d8f0c9 60%, #c8f2b6 80%, #cff0c5); color: #475047; font-size: 8px; line-height: 11px; }
.weather { justify-self: start; gap: 5px; text-align: left; }
.weather svg { width: 15px; height: 15px; stroke: none; }
.apps-row { display: flex; align-items: center; gap: 5px; }
.apps-row button { width: 25px; height: 26px; border-radius: 3px; }
.apps-row svg { width: 16px; height: 16px; }
.apps-row button svg { stroke-width: 1; }
.apps-row button:not(.run) svg { stroke: none; }
.apps-row .run svg { stroke: #e11f45; }
.find { width: 144px; height: 20px; display: flex; align-items: center; padding: 0 1px 0 6px; border-radius: 10px; background: #f9fcf5; box-shadow: 0 1px #c0ccb9; }
.apps-row svg.mag { width: 11px; height: 11px; }
.find input { flex: 1; min-width: 0; padding-left: 6px; font-size: 10px; }
.find input::placeholder { color: #747774; opacity: 1; }
.apps-row svg.city { width: 34px; height: 18px; stroke: none; }
.run, .on { background-image: linear-gradient(#377da0, #377da0); background-size: 10px 2px; background-repeat: no-repeat; background-position: 50% 100%; }
.run { background-color: #f3fae9; }
.on { background-image: linear-gradient(#89938a, #89938a); background-size: 4px 2px; }
.tray { display: flex; align-items: center; justify-content: flex-end; gap: 12px; }
.mic svg, .net svg { width: 12px; height: 12px; }
.net { gap: 4px; }
.time { text-align: right; }
.watermark { position: absolute; left: 1041px; top: 626px; color: rgba(170, 170, 170, .55); font-size: 9px; line-height: 12px; pointer-events: none; }
.watermark strong { display: block; font-weight: 400; font-size: 13px; line-height: 16px; }
```

FILE: chart.js
```js
const NS = 'http://www.w3.org/2000/svg';
function add(parent, name, attrs, text) {
  const el = document.createElementNS(NS, name);
  for (const key in attrs) el.setAttribute(key, attrs[key]);
  if (text) el.textContent = text;
  parent.appendChild(el);
  return el;
}
let seed = 11;
function rnd() { seed = (seed * 16807) % 2147483647; return seed / 2147483647; }
const byId = id => document.getElementById(id);

// grid and axes
const times = [[127, '29'], [190, '06:00'], [253, '12:00'], [317, '18:00'], [380, '30'], [443, '06:00'], [506, '12:00'], [570, '18:00'], [633, '31'], [696, '06:00'], [759, '12:00'], [812, '2026'], [875, '2'], [939, '06:00'], [1002, '']];
for (const [x, label] of times) {
  add(byId('gridlines'), 'path', { class: 'gridline', d: `M${x}.5 77V612` });
  if (label) add(byId('axes'), 'text', { class: 'axis mid', x, y: 627 }, label);
}
for (let i = 0; i < 18; i++) {
  const y = Math.round(97 + i * 29.3);
  add(byId('gridlines'), 'path', { class: 'gridline', d: `M68 ${y}.5H1072` });
  if (![0, 2, 5, 11].includes(i)) add(byId('axes'), 'text', { class: 'axis right', x: 1106, y: y + 3 }, `2.${544 - i * 4},0`);
}

// market sessions: x1, y1, x2, y2
const colours = { Tokyo: '#d9d64a', London: '#2547b8', 'New York': '#b5501f' };
const sessions = [
  ['Tokyo', 84, 137, 125, 176], ['London', 158, 162, 178, 198], ['New York', 227, 164, 273, 325],
  ['Tokyo', 337, 266, 378, 290], ['London', 411, 252, 431, 303], ['New York', 480, 258, 526, 366],
  ['Tokyo', 591, 435, 631, 460], ['London', 664, 468, 684, 522], ['New York', 733, 401, 779, 519],
  ['Tokyo', 833, 471, 873, 522], ['London', 907, 417, 927, 488]
];
for (const [name, x1, y1, x2, y2] of sessions) {
  const c = colours[name];
  add(byId('sessions'), 'rect', { x: x1 + .5, y: y1 + .5, width: x2 - x1 - 1, height: y2 - y1 - 1, fill: c, 'fill-opacity': .15, stroke: c, 'stroke-opacity': name === 'Tokyo' ? .9 : .55, 'stroke-dasharray': name === 'Tokyo' ? '1 1' : 'none', 'stroke-width': 1 });
  add(byId('sessions'), 'text', { class: 'slabel', x: (x1 + x2) / 2 + 1, y: y1 - 6, fill: name === 'Tokyo' ? '#f0ee3c' : c }, name);
}

// closing prices along the chart
const closes = [68,152,70,147,73,158,77,161,81,150,84,141,87,152,91,166,94,172,98,170,101,166,105,169,110,161,116,155,121,152,124,150,127,162,133,163,138,158,141,152,145,165,149,178,153,168,157,166,161,172,164,178,167,195,170,172,175,170,180,166,184,163,187,176,192,172,197,168,201,180,205,196,208,225,211,228,213,212,217,215,221,230,225,256,227,203,229,205,231,250,233,275,237,290,241,310,245,282,249,290,253,303,257,318,261,305,265,290,268,286,272,300,276,306,278,295,282,280,288,273,291,292,296,285,302,288,306,282,314,283,320,280,325,283,333,273,337,283,341,284,346,270,350,273,354,284,360,280,364,270,369,272,378,269,389,268,394,278,400,280,404,300,409,300,412,282,417,275,422,262,430,257,436,250,443,262,448,255,452,243,458,250,463,252,468,262,472,270,477,262,480,278,482,300,485,330,488,348,492,345,496,325,499,300,503,330,508,340,513,330,518,328,522,338,527,340,531,350,536,370,539,385,542,375,545,395,548,415,552,417,556,413,561,419,568,421,574,418,580,418,586,430,590,445,597,452,603,443,610,438,614,445,619,452,624,444,629,443,634,452,639,465,643,476,650,470,655,476,658,467,663,475,668,495,672,515,674,515,676,478,680,475,685,470,690,467,700,463,707,455,712,438,716,430,722,430,726,402,731,405,733,412,735,460,737,440,739,495,742,475,747,490,752,508,757,495,762,485,768,500,771,485,775,490,779,478,782,476,786,500,792,535,796,562,799,545,803,548,805,538,810,553,814,518,817,515,822,520,826,517,832,520,834,494,840,488,846,483,852,476,857,485,863,478,868,480,875,487,882,478,886,470,893,468,897,485,905,486,908,465,913,470,917,455,920,440,926,420,932,432,937,416,942,425,946,408,951,420,958,435,963,455,968,464,971,456,974,454];
function priceAt(x) {
  let i = 0;
  while (i < closes.length - 4 && closes[i + 2] < x) i += 2;
  const t = (x - closes[i]) / (closes[i + 2] - closes[i]);
  return closes[i + 1] + (closes[i + 3] - closes[i + 1]) * Math.max(0, Math.min(1, t));
}
const spikes = [[227.6, 165, 265], [491, 330, 365], [741, 440, 518], [499.500, 291, 330], [167.500, 165, 197], [803.500, 535, 571], [452, 238, 262], [968, 455, 471], [674.500, 480, 521], [946, 402, 425]];
const paths = { upwick: '', downwick: '', upbody: '', downbody: '' };
let open = 152;
for (let x = 69; x < 974; x += 2.636) {
  const close = priceAt(x) + (rnd() - .5) * 3;
  let high = Math.min(open, close) - 1 - rnd() * 6;
  let low = Math.max(open, close) + 1 + rnd() * 6;
  if ((x > 236 && x < 292) || (x > 499 && x < 530) || (x > 742 && x < 775)) { high -= rnd() * 8; low += rnd() * 6; }
  for (const [sx, h, l] of spikes) if (Math.abs(sx - x) < 1.318) { high = h; low = l; }
  const side = close <= open ? 'up' : 'down';
  const px = x.toFixed(1);
  paths[side + 'wick'] += `M${px} ${high.toFixed(1)}V${low.toFixed(1)}`;
  paths[side + 'body'] += `M${px} ${Math.min(open, close).toFixed(1)}V${(Math.max(open, close) + 1).toFixed(1)}`;
  open = close;
}
for (const part of ['wick', 'body']) for (const side of ['up', 'down'])
  add(byId('candles'), 'path', { class: `${side} ${part}`, d: paths[side + part] });

// seasonal comparison
const seasonal = byId('seasonal');
for (const x of [1130, 1161, 1191, 1221]) add(seasonal, 'path', { d: `M${x}.5 587V681`, stroke: '#555', 'stroke-dasharray': '5 5' });
function jagged(points, stroke) {
  let d = `M${points[0]} ${points[1]}`;
  for (let i = 2; i < points.length; i += 2) {
    const x0 = points[i - 2], y0 = points[i - 1], x1 = points[i], y1 = points[i + 1], n = Math.max(1, Math.round(x1 - x0));
    for (let k = 1; k <= n; k++) d += `L${(x0 + (x1 - x0) * k / n).toFixed(1)} ${(y0 + (y1 - y0) * k / n + (rnd() - .5) * 5).toFixed(1)}`;
  }
  add(seasonal, 'path', { d, stroke });
}
jagged([1127,630,1130,628,1133,627,1136,623,1138,631,1143,627,1146,639,1150,631,1155,625,1160,632,1170,633,1173,627,1175,610,1177,620,1179,609,1180,625,1184,630,1187,617,1190,625,1193,613,1197,612,1200,616,1205,610,1210,613,1213,598,1215,605,1217,595,1220,592,1222,600,1225,597,1226,608,1228,605,1231,612], '#e18b12');
jagged([1127,638,1131,646,1135,650,1138,660,1142,677,1143,665,1147,663,1150,650,1155,648,1160,652,1163,645,1167,642,1172,635,1177,634,1183,640,1186,627,1190,623,1195,620,1200,614,1205,615,1208,610,1211,612,1215,620,1219,628,1222,612,1226,605,1231,614], '#2dc84d');
add(seasonal, 'path', { d: 'M1127 634.5H1239', stroke: '#e0e0e0' });

// watchlist rows
const coin = (bg, text, size = '') => `<span class="coin ${size}" style="background:${bg}">${text}</span>`;
const us = '<svg><use href="#us"/></svg>';
const pair = (back, front, extra) => `<svg viewBox="0 0 12 12"><circle cx="8" cy="4" r="4" fill="${back}" stroke="none"/><path d="M7 1.500h4M7 4h5" stroke="#d54860" stroke-width="1"/><circle cx="4.500" cy="7.500" r="4.500" fill="${front}" stroke="none"/><path d="M1 7h7M2 10h5" stroke="${extra}" stroke-width="1"/></svg>`;
const rows = [
  ['NY'], [coin('#531333', '2000', 'small'), 'RT', '2.495', '12,8', '0,52%'], [us, 'SF', '6.881', '36,8', '0,54%'],
  [coin('#22a6c4', '30'), 'US', '48.21', '150,', '0,31%'], [coin('#1a9be0', '100', 'small'), 'US', '25.46', '243,', '0,97%'],
  ['FOREX'], [pair('#f3eef0', '#d3e2f4', '#d74c61'), 'US', '156,8', '0,03', '0,02%'], [pair('#4d78c5', '#efd3dc', '#c83455'), 'GI', '1,345', '0,00', '0,02%'], [pair('#e9e5ee', '#2e5cb8', '#7395dc'), 'EU', '1,172', '−0,0', '−0,16%'],
  ['FUTUROS'], ['<svg viewBox="0 0 12 12"><path fill="#fff" stroke="none" d="M6 2q5 7 0 8-5-1 0-8z"/></svg>', 'US', '56,88', '−0,5', '−0,91%'],
  ['<svg viewBox="0 0 12 12"><circle cx="6" cy="6" r="6" fill="#a8a8a8" stroke="none"/><path fill="#fff" stroke="none" d="M5 3h2l1 2H4zM3 6h2l1 2.500H2zM7 6h2l1 2.500H6.500z"/></svg>', 'SI', '74,08', '2,48', '3,47%']
];
byId('quotes').innerHTML = rows.map((r, i) => {
  if (r.length === 1) return `<tr class="group${i ? '' : ' first'}"><td colspan="6"><svg><use href="#chev"/></svg>${r[0]}</td></tr>`;
  const tone = r[4][0] === '−' ? 'neg' : 'pos';
  const flag = i < 5 ? '<svg class="flag"><use href="#flag"/></svg>' : '';
  return `<tr class="${i === 1 ? 'picked' : ''}"><td>${flag}</td><td class="lg">${r[0]}</td><td class="sy">${r[1]}</td><td class="la">${r[2]}</td><td class="ch ${tone}">${r[3]}</td><td class="pc ${tone}">${r[4]}</td></tr>`;
}).join('');
```
